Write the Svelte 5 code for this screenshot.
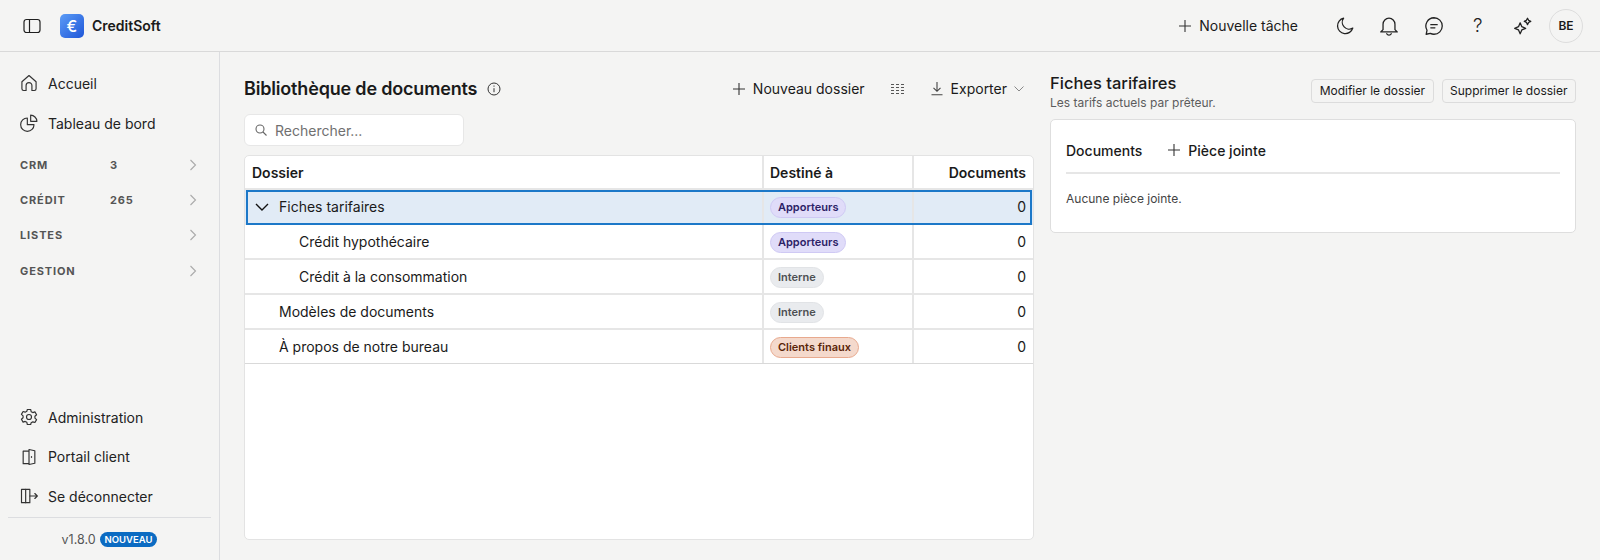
<script>
  const folders = [
    { name: 'Fiches tarifaires', depth: 0, open: true, selected: true, target: 'Apporteurs', kind: 'violet' },
    { name: 'Crédit hypothécaire', depth: 1, target: 'Apporteurs', kind: 'violet' },
    { name: 'Crédit à la consommation', depth: 1, target: 'Interne', kind: 'grey' },
    { name: 'Modèles de documents', depth: 0, target: 'Interne', kind: 'grey' },
    { name: 'À propos de notre bureau', depth: 0, target: 'Clients finaux', kind: 'orange' }
  ];

  const groups = [
    { label: 'CRM', count: '3' },
    { label: 'CRÉDIT', count: '265' },
    { label: 'LISTES', count: '' },
    { label: 'GESTION', count: '' }
  ];
</script>

<div class="app">
  <header class="topbar">
    <div class="brand">
      <svg class="toggle" width="18" height="18" viewBox="0 0 18 18" fill="none" stroke="#1f1f1f" stroke-width="1.2">
        <rect x="1" y="2.5" width="16" height="13" rx="2.5" />
        <path d="M6.5 2.5v13" />
      </svg>
      <span class="logo">€</span>
      <span class="brand-name">CreditSoft</span>
    </div>
    <div class="top-actions">
      <button class="new-task">
        <svg width="14" height="14" viewBox="0 0 14 14" stroke="#333" stroke-width="1.1"><path d="M7 1v12M1 7h12" /></svg>
        Nouvelle tâche
      </button>
      <div class="top-icons">
        <svg width="22" height="22" viewBox="0 0 24 24" fill="none" stroke="#222" stroke-width="1.4" stroke-linejoin="round"><path d="M10.5 3.5a8.5 8.5 0 1 0 10 10.8A7.5 7.5 0 0 1 10.5 3.5z" /></svg>
        <svg width="22" height="22" viewBox="0 0 24 24" fill="none" stroke="#222" stroke-width="1.4" stroke-linejoin="round" stroke-linecap="round"><path d="M5.5 16V10a6.500 6.500 0 0 1 13 0v6l2.500 2.500H3z" /><path d="M9.500 20.500a2.800 2.800 0 0 0 5 0" /></svg>
        <svg width="22" height="22" viewBox="0 0 24 24" fill="none" stroke="#222" stroke-width="1.4" stroke-linecap="round" stroke-linejoin="round"><path d="M12 3a9 9 0 0 1 0 18 9 9 0 0 1-4-.9L3.500 21l.9-4.400A9 9 0 0 1 12 3z" /><path d="M8.500 10.500h7M8.500 14h4.500" /></svg>
        <span class="help">?</span>
        <svg width="22" height="22" viewBox="0 0 24 24" fill="none" stroke="#222" stroke-width="1.4" stroke-linejoin="round"><path d="M10 8.500l1.800 4.200L16 14.500l-4.200 1.800L10 20.500l-1.800-4.200L4 14.500l4.200-1.800z" /><path d="M18 3.500l1.200 2.300 2.300 1.200-2.300 1.200L18 10.500l-1.200-2.500-2.300-1 2.300-1.200z" /></svg>
      </div>
      <span class="avatar">BE</span>
    </div>
  </header>

  <div class="body">
    <aside class="sidebar">
      <nav class="nav-top">
        <a class="nav-link">
          <svg width="20" height="20" viewBox="0 0 24 24" fill="none" stroke="#333" stroke-width="1.4" stroke-linejoin="round"><path d="M3.500 10.500L12 3l8.500 7.500V19a2 2 0 0 1-2 2h-3v-6a3.500 3.500 0 0 0-7 0v6h-3a2 2 0 0 1-2-2z" /></svg>
          Accueil
        </a>
        <a class="nav-link">
          <svg width="20" height="20" viewBox="0 0 24 24" fill="none" stroke="#333" stroke-width="1.4" stroke-linejoin="round"><path d="M10 6a8 8 0 1 0 8 8h-8z" /><path d="M14 2.500a8 8 0 0 1 7.500 7.500H14z" /></svg>
          Tableau de bord
        </a>
        {#each groups as group}
          <div class="group">
            <span class="group-label">{group.label}</span>
            <span class="group-count">{group.count}</span>
            <svg width="8" height="12" viewBox="0 0 8 12" fill="none" stroke="#aaa" stroke-width="1.1"><path d="M1.500 1l5 5-5 5" /></svg>
          </div>
        {/each}
      </nav>
      <nav class="nav-bottom">
        <a class="nav-link">
          <svg width="20" height="20" viewBox="0 0 24 24" fill="none" stroke="#333" stroke-width="1.4" stroke-linejoin="round"><circle cx="12" cy="12" r="3" /><path d="M10 3h4l.6 2.600 2 1.100 2.500-.8 2 3.400-2 1.800v2.300l2 1.800-2 3.400-2.500-.8-2 1.100L14 21h-4l-.6-2.600-2-1.100-2.500.8-2-3.400 2-1.800v-2.300l-2-1.800 2-3.400 2.500.8 2-1.100z" /></svg>
          Administration
        </a>
        <a class="nav-link">
          <svg width="20" height="20" viewBox="0 0 24 24" fill="none" stroke="#333" stroke-width="1.4" stroke-linejoin="round"><path d="M12 5H5v15h7" /><path d="M12 3l7 1.500v15L12 21z" /><path d="M15 11v2" /></svg>
          Portail client
        </a>
        <a class="nav-link">
          <svg width="20" height="20" viewBox="0 0 24 24" fill="none" stroke="#333" stroke-width="1.4" stroke-linejoin="round" stroke-linecap="round"><path d="M13 4H3v16h10V4z" /><path d="M8 4v16" /><path d="M13 12h9M19 9l3 3-3 3" /></svg>
          Se déconnecter
        </a>
        <div class="version">
          v1.8.0 <span class="new-badge">NOUVEAU</span>
        </div>
      </nav>
    </aside>

    <main class="library">
      <div class="library-head">
        <div class="title-wrap">
          <h1>Bibliothèque de documents</h1>
          <svg width="14" height="14" viewBox="0 0 14 14" fill="none" stroke="#333" stroke-width="1"><circle cx="7" cy="7" r="6" /><path d="M7 6.200v4M7 3.500v1.200" /></svg>
        </div>
        <div class="library-actions">
          <button class="plain">
            <svg width="14" height="14" viewBox="0 0 14 14" stroke="#333" stroke-width="1.1"><path d="M7 1v12M1 7h12" /></svg>
            Nouveau dossier
          </button>
          <svg class="grid-icon" width="13" height="12" viewBox="0 0 13 12" stroke="#555" stroke-width="1" stroke-dasharray="3 2"><path d="M0 1.500h13M0 4.500h13M0 7.500h13M0 10.500h13" /></svg>
          <button class="plain">
            <svg width="14" height="15" viewBox="0 0 14 15" fill="none" stroke="#444" stroke-width="1.1"><path d="M7 1v9M3.500 6.800L7 10.300l3.500-3.500M1.500 13.800h11" /></svg>
            Exporter
            <svg width="10" height="6" viewBox="0 0 10 6" fill="none" stroke="#888" stroke-width="1"><path d="M.5.500L5 5 9.500.500" /></svg>
          </button>
        </div>
      </div>

      <label class="search">
        <svg width="12" height="12" viewBox="0 0 12 12" fill="none" stroke="#666" stroke-width="1.1"><circle cx="5" cy="5" r="4" /><path d="M8 8l3.500 3.500" /></svg>
        <input type="text" placeholder="Rechercher..." />
      </label>

      <div class="table">
        <div class="row head">
          <div class="cell">Dossier</div>
          <div class="cell">Destiné à</div>
          <div class="cell num">Documents</div>
        </div>
        {#each folders as folder}
          <div class="row" class:selected={folder.selected}>
            <div class="cell name" class:nested={folder.depth === 1}>
              {#if folder.open}
                <svg class="open" width="14" height="8" viewBox="0 0 14 8" fill="none" stroke="#111" stroke-width="1.4"><path d="M1 1l6 6 6-6" /></svg>
              {/if}
              {folder.name}
            </div>
            <div class="cell">
              <span class="tag {folder.kind}">{folder.target}</span>
            </div>
            <div class="cell num">0</div>
          </div>
        {/each}
      </div>
    </main>

    <section class="detail">
      <div class="detail-head">
        <div>
          <h2>Fiches tarifaires</h2>
          <p>Les tarifs actuels par prêteur.</p>
        </div>
        <div class="detail-actions">
          <button class="outline">Modifier le dossier</button>
          <button class="outline">Supprimer le dossier</button>
        </div>
      </div>
      <div class="card">
        <div class="card-head">
          <span class="card-title">Documents</span>
          <button class="attach">
            <svg width="14" height="14" viewBox="0 0 14 14" stroke="#333" stroke-width="1.1"><path d="M7 1v12M1 7h12" /></svg>
            Pièce jointe
          </button>
        </div>
        <p class="empty">Aucune pièce jointe.</p>
      </div>
    </section>
  </div>
</div>

<style>
  :global(body) {
    margin: 0;
    background: #f4f4f3;
    font-family: Inter, "Liberation Sans", sans-serif;
    color: #1a1a1a;
  }

  button {
    font: inherit;
    color: inherit;
    background: none;
    border: none;
    padding: 0;
    display: flex;
    align-items: center;
  }

  .app {
    height: 560px;
    display: flex;
    flex-direction: column;
    overflow: hidden;
  }

  .topbar {
    height: 51px;
    flex: none;
    display: flex;
    justify-content: space-between;
    align-items: center;
    padding: 0 17px 0 23px;
    border-bottom: 1px solid #d9d9d9;
  }

  .brand {
    display: flex;
    align-items: center;
  }

  .toggle {
    margin-right: 19px;
  }

  .logo {
    width: 24px;
    height: 24px;
    border-radius: 5px;
    background: linear-gradient(135deg, #5b9cf6, #1f56d8);
    color: #fff;
    font-size: 16px;
    font-weight: 500;
    display: flex;
    align-items: center;
    justify-content: center;
    margin-right: 8px;
  }

  .brand-name {
    font-size: 14px;
    font-weight: 600;
  }

  .top-actions {
    display: flex;
    align-items: center;
  }

  .new-task {
    font-size: 14px;
    gap: 7px;
    margin-right: 36px;
  }

  .top-icons {
    display: flex;
    align-items: center;
    gap: 22.25px;
    margin-right: 16px;
  }

  .help {
    width: 22px;
    text-align: center;
    font-size: 19px;
    font-weight: 300;
    color: #222;
  }

  .avatar {
    width: 34px;
    height: 34px;
    box-sizing: border-box;
    border: 1px solid #ddd;
    border-radius: 50%;
    display: flex;
    align-items: center;
    justify-content: center;
    font-size: 12px;
    font-weight: 600;
  }

  .body {
    flex: 1;
    display: flex;
    min-height: 0;
  }

  .sidebar {
    width: 220px;
    flex: none;
    box-sizing: border-box;
    border-right: 1px solid #dcdde0;
    padding: 11px 8px 0;
    display: flex;
    flex-direction: column;
    justify-content: space-between;
  }

  .nav-link {
    display: flex;
    align-items: center;
    gap: 9px;
    height: 40px;
    padding-left: 11px;
    font-size: 14px;
    color: #222;
  }

  .nav-top .nav-link + .nav-link {
    margin-bottom: 4px;
  }

  .group {
    display: grid;
    grid-template-columns: 90px 1fr 8px;
    align-items: center;
    height: 35.3px;
    padding: 0 14px 0 12px;
    font-size: 11px;
    font-weight: 700;
    letter-spacing: 0.08em;
    color: #555;
  }

  .nav-bottom .nav-link {
    height: 39.5px;
  }

  .version {
    margin-top: 1px;
    border-top: 1px solid #dcdde0;
    height: 42px;
    display: flex;
    align-items: center;
    justify-content: center;
    gap: 4px;
    font-size: 12.5px;
    color: #555;
  }

  .new-badge {
    background: #0b6bc2;
    color: #fff;
    font-size: 9.5px;
    font-weight: 600;
    padding: 2px 5px;
    border-radius: 8px;
    line-height: 11px;
  }

  .library {
    width: 790px;
    flex: none;
    margin-left: 24px;
    display: flex;
    flex-direction: column;
    padding-bottom: 20px;
  }

  .library-head {
    height: 62px;
    box-sizing: border-box;
    padding-top: 11px;
    flex: none;
    display: flex;
    justify-content: space-between;
    align-items: center;
  }

  .title-wrap {
    display: flex;
    align-items: center;
    gap: 10px;
  }

  h1 {
    font-size: 18px;
    font-weight: 600;
    letter-spacing: -0.01em;
    margin: 0;
  }

  .library-actions {
    display: flex;
    align-items: center;
    gap: 26px;
    padding-right: 10px;
    font-size: 14px;
  }

  .plain {
    gap: 7px;
  }

  .search {
    width: 220px;
    height: 32px;
    box-sizing: border-box;
    flex: none;
    background: #fff;
    border: 1px solid #e7e7e7;
    border-radius: 6px;
    display: flex;
    align-items: center;
    gap: 8px;
    padding-left: 10px;
    margin-bottom: 9px;
  }

  .search input {
    border: none;
    outline: none;
    background: none;
    font: inherit;
    font-size: 14px;
    padding: 0;
    width: 170px;
  }

  .search input::placeholder {
    color: #707070;
  }

  .table {
    flex: 1;
    background: #fff;
    border: 1px solid #e3e3e3;
    border-radius: 5px;
    font-size: 14px;
    overflow: hidden;
  }

  .row {
    display: grid;
    grid-template-columns: 519px 150px 1fr;
    height: 35px;
    box-sizing: border-box;
    border-bottom: 2px solid #e6e6e6;
    position: relative;
  }

  .row:last-child {
    height: 34px;
    border-bottom: 1px solid #d9d9d9;
  }

  .row.head {
    height: 34px;
    font-weight: 600;
  }

  .row.selected {
    background: #e1ebf6;
  }

  .row.selected::after {
    content: '';
    position: absolute;
    inset: 0 1px -2px 1px;
    border: 2px solid #1c78c8;
    pointer-events: none;
  }

  .cell {
    display: flex;
    align-items: center;
    padding: 0 7px;
    border-right: 2px solid #e6e6e6;
  }

  .cell + .cell {
    padding-left: 6px;
  }

  .cell.num {
    justify-content: flex-end;
    border-right: none;
  }

  .cell.name {
    padding-left: 34px;
    position: relative;
  }

  .cell.nested {
    padding-left: 54px;
  }

  .open {
    position: absolute;
    left: 10px;
    top: 13px;
  }

  .tag {
    font-size: 11px;
    font-weight: 600;
    line-height: 19px;
    padding: 0 7px;
    margin-top: 1.5px;
    border-radius: 11px;
    border: 1px solid;
  }

  .violet {
    background: #e0dcf9;
    border-color: #cfc9f4;
    color: #2c2266;
  }

  .grey {
    background: #e9ebee;
    border-color: #e1e3e6;
    color: #4d4f53;
  }

  .orange {
    background: #f4d9cc;
    border-color: #e8a98e;
    color: #5a2508;
  }

  .detail {
    flex: 1;
    margin: 0 24px 0 16px;
    min-width: 0;
  }

  .detail-head {
    display: flex;
    justify-content: space-between;
    align-items: center;
    padding-top: 19px;
    height: 39px;
    margin-bottom: 9px;
  }

  h2 {
    font-size: 16.5px;
    font-weight: 500;
    margin: 0;
    line-height: 23px;
  }

  .detail-head p {
    margin: 0;
    font-size: 12px;
    line-height: 15px;
    color: #5c5c5c;
  }

  .detail-actions {
    display: flex;
    gap: 8px;
  }

  .outline {
    height: 24px;
    box-sizing: border-box;
    border: 1px solid #dcdcdc;
    border-radius: 4px;
    padding: 0 7.5px;
    font-size: 12px;
  }

  .card {
    background: #fff;
    border: 1px solid #dedede;
    border-radius: 5px;
    height: 114px;
    box-sizing: border-box;
    padding: 0 15px;
  }

  .card-head {
    height: 54px;
    box-sizing: border-box;
    padding-top: 8px;
    display: flex;
    align-items: center;
    gap: 25px;
    border-bottom: 2px solid #e6e6e6;
    font-size: 14px;
  }

  .card-title {
    font-weight: 500;
  }

  .attach {
    gap: 7px;
    font-weight: 500;
  }

  .empty {
    margin: 17px 0 0;
    font-size: 12px;
    color: #444;
  }
</style>
